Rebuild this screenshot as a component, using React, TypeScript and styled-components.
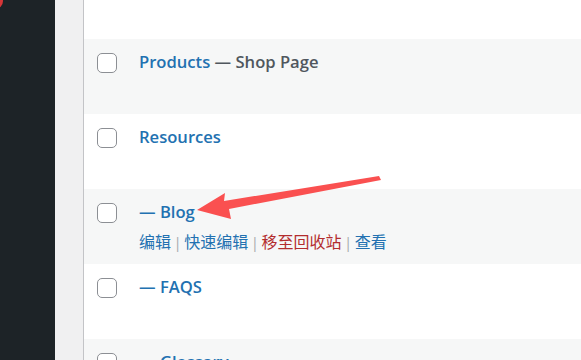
import React from "react";
import styled, { createGlobalStyle } from "styled-components";

const Global = createGlobalStyle`
  html, body { margin: 0; padding: 0; background: #fff; overflow: hidden; }
  body { font-family: "Open Sans", "Noto Sans CJK SC", sans-serif; }
`;

const Page = styled.div`
  position: relative;
  display: flex;
  width: 581px;
  height: 360px;
  overflow: hidden;
`;

const Sidebar = styled.div`
  position: relative;
  width: 55px;
  flex: none;
  background: #1d2327;
`;

const Badge = styled.span`
  position: absolute;
  left: -13px;
  top: -7px;
  width: 16px;
  height: 16px;
  border-radius: 50%;
  background: #d63638;
`;

const Gutter = styled.div`
  width: 28px;
  flex: none;
  background: #f0f0f1;
  border-right: 1px solid #c3c4c7;
`;

const Table = styled.div`
  flex: 1;
  display: flex;
  flex-direction: column;
  margin-top: -36px;
`;

const Row = styled.div<{ $alt?: boolean }>`
  height: 75px;
  flex: none;
  display: flex;
  align-items: flex-start;
  background: ${(p) => (p.$alt ? "#f6f7f7" : "#fff")};
`;

const CheckCell = styled.div`
  width: 55px;
  flex: none;
  padding: 14px 0 0 13px;
  box-sizing: border-box;
`;

const Box = styled.span`
  display: block;
  width: 20px;
  height: 20px;
  box-sizing: border-box;
  border: 1px solid #8c8f94;
  border-radius: 5px;
  background: #fff;
`;

const TitleCell = styled.div`
  padding-top: 11px;
  display: flex;
  flex-direction: column;
`;

const Title = styled.div`
  font-size: 16.6px;
  line-height: 24px;
  font-weight: 600;
  color: #2271b1;
  white-space: nowrap;
`;

const State = styled.span`
  color: #50575e;
`;

const Actions = styled.div`
  margin-top: 6px;
  font-family: "Noto Sans CJK SC", sans-serif;
  font-size: 16px;
  line-height: 22px;
  color: #2271b1;
  white-space: nowrap;
`;

const Sep = styled.span`
  color: #a7aaad;
  margin: 0 2.5px;
  font-family: "Open Sans", sans-serif;
  font-size: 15px;
`;

const Trash = styled.span`
  color: #b32d2e;
`;

const ArrowSvg = styled.svg`
  position: absolute;
  left: 0;
  top: 0;
  pointer-events: none;
`;

const rows = [
  { title: "Products", state: "— Shop Page" },
  { title: "Resources" },
  { title: "— Blog", actions: true },
  { title: "— FAQS" },
  { title: "— Glossary" },
];

export default function App() {
  return (
    <Page>
      <Global />
      <Sidebar>
        <Badge />
      </Sidebar>
      <Gutter />
      <Table>
        <Row />
        {rows.map((r, i) => (
          <Row key={i} $alt={i % 2 === 0}>
            <CheckCell>
              <Box />
            </CheckCell>
            <TitleCell>
              <Title>
                {r.title}
                {r.state && <State> {r.state}</State>}
              </Title>
              {r.actions && (
                <Actions>
                  编辑<Sep>|</Sep>快速编辑<Sep>|</Sep>
                  <Trash>移至回收站</Trash>
                  <Sep>|</Sep>查看
                </Actions>
              )}
            </TitleCell>
          </Row>
        ))}
      </Table>
      <ArrowSvg width="581" height="360" viewBox="0 0 581 360">
        <polygon
          points="197,210 225,193 224,201 379,176 381,180 229,209 231,219"
          fill="#fa5050"
        />
      </ArrowSvg>
    </Page>
  );
}
